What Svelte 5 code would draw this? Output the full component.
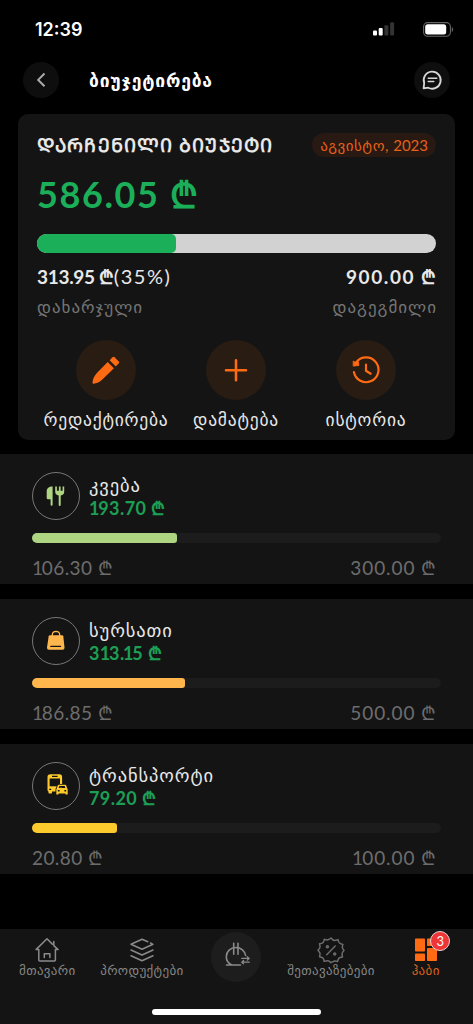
<script lang="ts">
	const categories = [
		{ id: 'food', name: 'კვება', left: '193.70', spent: '106.30', planned: '300.00', color: '#aed581', percent: 35.4 },
		{ id: 'grocery', name: 'სურსათი', left: '313.15', spent: '186.85', planned: '500.00', color: '#ffb74d', percent: 37.4 },
		{ id: 'transport', name: 'ტრანსპორტი', left: '79.20', spent: '20.80', planned: '100.00', color: '#fdca2d', percent: 20.7 }
	];
</script>

<!-- the digit 1 is set tighter than the other figures -->
{#snippet amount(value: string)}
	{#each value.split('') as ch}{#if ch === '1'}<span class="one">1</span>{:else}{ch}{/if}{/each} ₾
{/snippet}

<div class="screen">
	<div class="status">
		<span class="time">12:39</span>
		<svg class="signal" width="22" height="14" viewBox="0 0 22 14">
			<rect x="0" y="8.5" width="4" height="5" rx="1" fill="#fff" />
			<rect x="5.7" y="6" width="4" height="7.5" rx="1" fill="#fff" />
			<rect x="11.4" y="3.2" width="4" height="10.3" rx="1" fill="#333" />
			<rect x="17.1" y="0.3" width="4" height="13.2" rx="1" fill="#333" />
		</svg>
		<svg class="battery" width="31" height="15" viewBox="0 0 31 15">
			<rect x="0.6" y="0.6" width="26.8" height="13.6" rx="4" fill="none" stroke="#666" stroke-width="1.1" />
			<rect x="2.2" y="2.2" width="21" height="10.4" rx="2.5" fill="#fff" />
			<path d="M28.8 5v5c1.8-.8 1.8-4.2 0-5z" fill="#666" />
		</svg>
	</div>

	<header>
		<button class="round" aria-label="უკან">
			<svg width="36" height="36" viewBox="0 0 36 36" fill="none" stroke="#aaa" stroke-width="2">
				<path d="M21.5 11.5l-6.3 6.4 6.3 6.4" />
			</svg>
		</button>
		<h1>ბიუჯეტირება</h1>
		<button class="round" aria-label="ჩატი">
			<svg width="36" height="36" viewBox="0 0 36 36" fill="none" stroke="#d6d6d6" stroke-width="1.8" stroke-linejoin="round">
				<path d="M9.6 26.4l.6-5.3a8.5 8.5 0 1 1 4 4.6z" />
				<path d="M14.2 16.2h8.6M14.2 19.6h5.6" stroke-width="1.5" stroke-linecap="round" />
			</svg>
		</button>
	</header>

	<section class="card">
		<div class="row top">
			<h2>ᲓᲐᲠᲩᲔᲜᲘᲚᲘ ᲑᲘᲣᲯᲔᲢᲘ</h2>
			<span class="month">აგვისტო, <b>2023</b></span>
		</div>
		<div class="total">586.05 ₾</div>
		<div class="bar"><div class="fill"></div></div>
		<div class="row sums">
			<span><b class="spent">313.95 ₾</b><span class="share">(35%)</span></span>
			<b class="planned">900.00 ₾</b>
		</div>
		<div class="row hints">
			<span>დახარჯული</span>
			<span>დაგეგმილი</span>
		</div>
		<div class="actions">
			<button>
				<svg width="60" height="60" viewBox="0 0 60 60" fill="#ff6a13">
					<path d="M36.6 17.2q1-.8 1.9 0l4.3 4.3q.8.9 0 1.8l-3 3.1-6.2-6.2z" />
					<path d="M31.7 22l6.2 6.2-11 10.9c-3 3-6.3 4.5-9.5 4.7-.5 0-.9-.3-.9-.8.1-3.2 1.4-6.9 4.4-10z" />
				</svg>
				<span>რედაქტირება</span>
			</button>
			<button>
				<svg width="60" height="60" viewBox="0 0 60 60" fill="none" stroke="#ff6a13" stroke-width="2.6" stroke-linecap="round">
					<path d="M30 20.3v20M20 30.3h20" />
				</svg>
				<span>დამატება</span>
			</button>
			<button>
				<svg width="60" height="60" viewBox="0 0 60 60" fill="none" stroke="#ff6a13" stroke-width="2.2" stroke-linecap="round">
					<path d="M20.3 22.2a12.4 12.4 0 1 1-2.4 9.8" />
					<path d="M17.6 21.3l1.4 1 3.5-.5.3 3.6-5.2.6z" fill="#ff6a13" stroke-width="1" stroke-linejoin="round" />
					<path d="M30 24.7v6.1l4.7 2.9" />
				</svg>
				<span>ისტორია</span>
			</button>
		</div>
	</section>

	{#each categories as c}
		<section class="category {c.id}">
			<div class="info">
				<div class="icon">
					{#if c.id === 'food'}
						<svg width="46" height="46" viewBox="0 0 46 46" fill={c.color}>
							<path d="M19.6 13.5v18.2q0 1.1-1 1.1t-1-1.1v-5.4h-2.6q-1.3 0-1.3-1.3v-6.8c0-3 2.2-4.7 5.9-4.7z" />
							<path d="M22.2 13.5v5.2q0 3.1 3.5 3.7v9.6q0 1 1 1t1-1v-9.6q3.5-.6 3.5-3.7v-5.2h-1.6v4.2h-2v-4.2h-1.7v4.2h-2v-4.2z" />
						</svg>
					{:else if c.id === 'grocery'}
						<svg width="46" height="46" viewBox="0 0 46 46">
							<path d="M17 17.2h12q1.1 0 1.3 1.1l1.2 11.1q.2 2.3-2 2.3H16q-2.2 0-2-2.3l1.7-11.1q.2-1.1 1.3-1.1z" fill={c.color} />
							<path d="M19.3 18v-1.3q.2-3.3 3.7-3.4 3.5.1 3.7 3.4V18" fill="none" stroke={c.color} stroke-width="1.3" />
							<path d="M17.8 28.4h9.8" stroke="#141414" stroke-width="1.2" stroke-linecap="round" />
						</svg>
					{:else}
						<svg width="46" height="46" viewBox="0 0 46 46" fill={c.color}>
							<path d="M17.3 11.2h9.2q2.6 0 2.6 2.7v12.6q0 1.6-1 2H19v1.2q0 .8-.8.8h-1.9q-.8 0-.8-.8v-1.2q-1-.4-1-1.8V13.9q0-2.7 2.8-2.7z" />
							<path d="M19 13.4h5.6M16.2 26.4h2" fill="none" stroke="#141414" stroke-width="1.2" />
							<rect x="16.6" y="15.5" width="10.4" height="7.8" fill="#141414" />
							<path fill-rule="evenodd" d="M26 21.7h6q1 0 1.3.9l.8 2.7q.6.3.6 1.2v5h-2.2v-1.1h-7v1.1h-2.2v-5q0-.9.6-1.2l.8-2.7q.2-.9 1.3-.9zm.3 1.4l-.6 2h6.6l-.6-2zM24.8 27v1.4h1.8V27zm6.6 0v1.4h1.8V27z" stroke="#141414" stroke-width="1.6" paint-order="stroke" />
						</svg>
					{/if}
				</div>
				<div>
					<div class="name">{c.name}</div>
					<div class="left">{@render amount(c.left)}</div>
				</div>
			</div>
			<div class="track">
				<div class="fill" style="width: {c.percent}%; background: {c.color}"></div>
			</div>
			<div class="row limits">
				<span class="used">{@render amount(c.spent)}</span>
				<span>{@render amount(c.planned)}</span>
			</div>
		</section>
	{/each}

	<nav>
		<div class="item home">
			<svg width="28" height="28" viewBox="0 0 28 28" fill="none" stroke="#8a8a8a" stroke-width="1.5" stroke-linejoin="round" stroke-linecap="round">
				<path d="M5.8 13.6H3L14 2.8l5.3 5.3M20.8 9.6l4.3 4h-2.7v10.5q0 1-1 1H6.8q-1 0-1-1V13.6M20.8 5.6v4" />
				<path d="M11.3 21.5v-3.7h5.6v3.7" />
			</svg>
			<span>მთავარი</span>
		</div>
		<div class="item products">
			<svg width="28" height="28" viewBox="0 0 28 28" fill="none" stroke="#8a8a8a" stroke-width="1.5" stroke-linejoin="round" stroke-linecap="round">
				<path d="M19.8 5.8L14 3.3 3 8.3l11 5 11-5-2.5-1.3" />
				<path d="M3 14l11 5 11-5M3 19.8l11 5 11-5" />
			</svg>
			<span>პროდუქტები</span>
		</div>
		<div class="item">
			<div class="transfer">
				<svg width="50" height="50" viewBox="0 0 50 50" fill="none" stroke="#8a8a8a" stroke-width="1.6" stroke-linecap="round">
					<path d="M15.5 33h14M21 33c-3.5-1.5-5.7-4.6-5.7-8.3 0-5.2 4.3-9.2 9.6-9.2 5.1 0 9 3.4 9.7 8" />
					<path d="M22.7 11.2v11M27 11.2v11" />
					<path d="M30.8 26.4h7.2M36.3 24.7l1.8 1.7-1.8 1.7M38.3 30.2h-7.4M32.6 28.5l-1.8 1.7 1.8 1.7" stroke-width="1.3" />
				</svg>
			</div>
		</div>
		<div class="item offers">
			<svg width="28" height="28" viewBox="0 0 28 28" fill="none" stroke="#6c6c6c" stroke-width="1.5" stroke-linejoin="round" stroke-linecap="round">
				<path d="M14 2q1.9 2.4 3.4 2.4T21 3.6q.5 2.8 1.7 3.6t3.2 1.2q-.9 2.4-.4 3.7T27 14.5q-1.9 1.7-1.9 3.2t.4 3.2q-2.8.3-3.7 1.4t-1.2 3.2q-2.4-.8-3.7-.3T14 26.7q-1.8-2-3.2-2t-3.6.7q-.4-2.6-1.5-3.5t-3.2-1.2q.8-2.4.4-3.6T1 14.2q2-1.6 2-3.1t-.5-3.3q2.6-.3 3.6-1.4t1.2-3.1q2.4.9 3.7.5T14 2z" />
				<path d="M18.2 10l-8.5 8.7" />
				<circle cx="10.4" cy="10.8" r="1" />
				<circle cx="17.7" cy="18" r="1" />
			</svg>
			<span>შეთავაზებები</span>
		</div>
		<div class="item hub">
			<svg width="28" height="28" viewBox="0 0 28 28" fill="#ff6a13">
				<rect x="3" y="2.5" width="10" height="13" rx=".8" />
				<rect x="3" y="17.6" width="10" height="7.5" rx=".8" />
				<rect x="15" y="2.5" width="10" height="7.5" rx=".8" />
				<rect x="15" y="12" width="10" height="13.1" rx=".8" />
			</svg>
			<i class="badge">3</i>
			<span>ჰაბი</span>
		</div>
		<div class="indicator"></div>
	</nav>
</div>

<style>
	:global(body) {
		background: #000;
	}

	.screen {
		width: 473px;
		height: 1024px;
		overflow: hidden;
		display: flex;
		flex-direction: column;
		background: #000;
		color: #e8e8e8;
		font-family: Lato, "DejaVu Sans", sans-serif;
		white-space: nowrap;
	}

	button {
		border: 0;
		padding: 0;
		background: none;
		color: inherit;
		font-family: inherit;
	}
	svg {
		display: block;
	}
	h1, h2 {
		margin: 0;
	}

	.status {
		height: 58px;
		padding: 0 19px 0 35px;
		display: flex;
		align-items: center;
	}
	.time {
		flex: 1;
		font-family: Inter, sans-serif;
		font-size: 18px;
		font-weight: 600;
		color: #fff;
	}
	.signal {
		margin-right: 28px;
	}

	header {
		height: 44px;
		padding: 0 23px;
		display: flex;
		align-items: center;
		box-sizing: border-box;
	}
	.round {
		width: 36px;
		height: 36px;
		border-radius: 50%;
		background: #0e0e0e;
	}
	h1 {
		flex: 1;
		margin-left: 30px;
		padding-top: 2px;
		font-size: 17.5px;
		line-height: 24px;
		letter-spacing: 0.8px;
		color: #fff;
	}

	.row {
		display: flex;
		justify-content: space-between;
		align-items: center;
	}

	.card {
		flex: none;
		height: 326px;
		margin: 12px 18px 14px;
		padding: 19px 19px 0;
		box-sizing: border-box;
		border-radius: 10px;
		background: #141414;
	}
	.top {
		height: 24px;
	}
	h2 {
		font-size: 19px;
		line-height: 24px;
		letter-spacing: 1.15px;
	}
	.month {
		height: 24px;
		padding: 0 8px;
		border-radius: 12px;
		background: #281912;
		color: #e5601a;
		font-size: 15px;
		line-height: 25px;
		letter-spacing: 0.5px;
	}
	.month b {
		font-weight: 400;
		letter-spacing: 0;
	}
	.total {
		height: 77px;
		font-size: 36px;
		line-height: 74px;
		font-weight: 700;
		letter-spacing: 1.6px;
		color: #1baf5a;
	}
	.bar {
		height: 19px;
		border-radius: 10px;
		background: #d2d2d2;
		overflow: hidden;
	}
	.bar .fill {
		width: 34.8%;
		height: 100%;
		border-radius: 0 5px 5px 0;
		background: #1baf5a;
	}
	.sums {
		height: 24px;
		margin-top: 12px;
		font-size: 19px;
	}
	.spent {
		letter-spacing: -0.3px;
	}
	.share {
		font-size: 20px;
		letter-spacing: 1.5px;
	}
	.planned {
		letter-spacing: 1.6px;
		margin-right: -2px;
	}
	.hints {
		height: 24px;
		margin-top: 5px;
		font-size: 17px;
		letter-spacing: 1px;
		color: #747474;
	}
	.hints span:last-child {
		margin-right: -1px;
	}
	.actions {
		margin: 22px 4px 0;
		display: grid;
		grid-template-columns: repeat(3, 130px);
	}
	.actions button {
		display: flex;
		flex-direction: column;
		align-items: center;
		font-size: 17.5px;
		line-height: 24px;
		letter-spacing: 0.8px;
	}
	.actions svg {
		margin-bottom: 8px;
		border-radius: 50%;
		background: #281c13;
	}

	.category {
		flex: none;
		height: 130px;
		margin-bottom: 15px;
		padding: 18px 32px 0;
		box-sizing: border-box;
		background: #141414;
	}
	.info {
		display: flex;
		gap: 9px;
	}
	.icon {
		border: 1px solid #777;
		border-radius: 50%;
	}
	.name {
		height: 24px;
		font-size: 18.5px;
		line-height: 26px;
		letter-spacing: 0.9px;
	}
	.left {
		font-size: 18px;
		line-height: 24px;
		font-weight: 700;
		letter-spacing: 0.4px;
		color: #1c9f55;
	}
	.one {
		margin: 0 -1.6px;
	}
	.one:first-child {
		margin-left: 0;
	}
	.track {
		height: 10px;
		margin-top: 13px;
		border-radius: 5px;
		background: #1c1c1c;
		overflow: hidden;
	}
	.track .fill {
		height: 100%;
		border-radius: 0 3px 3px 0;
	}
	.limits {
		height: 24px;
		margin: 13px 4px 0 0;
		font-size: 19px;
		letter-spacing: 0.9px;
		color: #6d6d6d;
	}
	.used {
		letter-spacing: 0.4px;
	}

	nav {
		flex: none;
		height: 95px;
		margin-top: 40px;
		display: grid;
		grid-template-columns: repeat(5, 1fr);
		grid-template-rows: 80px 6px;
		background: #141414;
	}
	.item {
		position: relative;
		padding-top: 7px;
		display: flex;
		flex-direction: column;
		align-items: center;
		font-size: 13px;
		line-height: 13px;
		letter-spacing: 0.35px;
		color: #858585;
	}
	.transfer {
		margin-top: -4px;
		border-radius: 50%;
		background: #1d1d1d;
	}
	.hub {
		color: #d9601e;
	}
	.badge {
		position: absolute;
		left: 52px;
		top: 2px;
		width: 18px;
		height: 18px;
		border: 1.5px solid #e8d5d5;
		border-radius: 50%;
		background: #ee3537;
		color: #fff;
		font-size: 13px;
		line-height: 18px;
		font-style: normal;
		text-align: center;
	}
	.indicator {
		grid-column: 1 / -1;
		width: 169px;
		border-radius: 3px;
		background: #fff;
		justify-self: center;
	}
</style>
